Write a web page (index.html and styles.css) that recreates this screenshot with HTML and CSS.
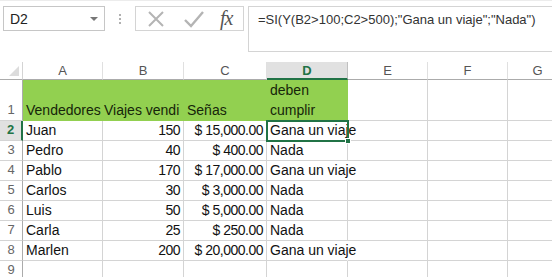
FILE: index.html
```html
<!DOCTYPE html>
<html lang="es">
<head>
    <meta charset="UTF-8">
    <title>Hoja de cálculo</title>
    <link rel="stylesheet" href="styles.css">
</head>
<body>
    <div class="formula-row">
        <div class="name-box">
            <span>D2</span>
            <span class="drop"></span>
        </div>
        <div class="grip"><i></i><i></i><i></i></div>
        <div class="fx-buttons">
            <svg class="fx-btn" width="20" height="20" viewBox="0 0 20 20">
                <path d="M3 3 L17 17 M17 3 L3 17" stroke="#b4b4b4" stroke-width="2" fill="none"/>
            </svg>
            <svg class="fx-btn" width="22" height="20" viewBox="0 0 22 20">
                <path d="M2 11 L8 17 L20 3" stroke="#b4b4b4" stroke-width="2.4" fill="none"/>
            </svg>
            <span class="fx">fx</span>
        </div>
        <div class="formula-box">=SI(Y(B2&gt;100;C2&gt;500);"Gana un viaje";"Nada")</div>
    </div>

    <div class="sheet">
        <div class="corner"><span class="tri"></span></div>
        <div class="col-head">A</div>
        <div class="col-head">B</div>
        <div class="col-head">C</div>
        <div class="col-head sel">D</div>
        <div class="col-head">E</div>
        <div class="col-head">F</div>
        <div class="col-head">G</div>

        <div class="row-head">1</div>
        <div class="cell fill">Vendedores</div>
        <div class="cell fill clip">Viajes vendi</div>
        <div class="cell fill">Señas</div>
        <div class="cell fill wrap">deben<br>cumplir</div>
        <div class="cell"></div>
        <div class="cell"></div>
        <div class="cell"></div>

        <div class="row-head sel">2</div>
        <div class="cell">Juan</div>
        <div class="cell num">150</div>
        <div class="cell num">$ 15,000.00</div>
        <div class="cell spill active">Gana un viaje<span class="handle"></span></div>
        <div class="cell"></div>
        <div class="cell"></div>
        <div class="cell"></div>

        <div class="row-head">3</div>
        <div class="cell">Pedro</div>
        <div class="cell num">40</div>
        <div class="cell num">$ 400.00</div>
        <div class="cell">Nada</div>
        <div class="cell"></div>
        <div class="cell"></div>
        <div class="cell"></div>

        <div class="row-head">4</div>
        <div class="cell">Pablo</div>
        <div class="cell num">170</div>
        <div class="cell num">$ 17,000.00</div>
        <div class="cell spill">Gana un viaje</div>
        <div class="cell"></div>
        <div class="cell"></div>
        <div class="cell"></div>

        <div class="row-head">5</div>
        <div class="cell">Carlos</div>
        <div class="cell num">30</div>
        <div class="cell num">$ 3,000.00</div>
        <div class="cell">Nada</div>
        <div class="cell"></div>
        <div class="cell"></div>
        <div class="cell"></div>

        <div class="row-head">6</div>
        <div class="cell">Luis</div>
        <div class="cell num">50</div>
        <div class="cell num">$ 5,000.00</div>
        <div class="cell">Nada</div>
        <div class="cell"></div>
        <div class="cell"></div>
        <div class="cell"></div>

        <div class="row-head">7</div>
        <div class="cell">Carla</div>
        <div class="cell num">25</div>
        <div class="cell num">$ 250.00</div>
        <div class="cell">Nada</div>
        <div class="cell"></div>
        <div class="cell"></div>
        <div class="cell"></div>

        <div class="row-head">8</div>
        <div class="cell">Marlen</div>
        <div class="cell num">200</div>
        <div class="cell num">$ 20,000.00</div>
        <div class="cell spill">Gana un viaje</div>
        <div class="cell"></div>
        <div class="cell"></div>
        <div class="cell"></div>

        <div class="row-head">9</div>
        <div class="cell"></div>
        <div class="cell"></div>
        <div class="cell"></div>
        <div class="cell"></div>
        <div class="cell"></div>
        <div class="cell"></div>
        <div class="cell"></div>
    </div>
</body>
</html>
```

FILE: styles.css
```css
* {
    margin: 0;
    padding: 0;
    box-sizing: border-box;
}

html, body {
    width: 100%;
    height: 100%;
    overflow: hidden;
}

body {
    background: #fff;
    font-family: 'Liberation Sans', Arial, sans-serif;
    color: #222;
}

/* Formula bar */
.formula-row {
    height: 62px;
    display: flex;
    align-items: flex-start;
    padding-top: 5px;
    border-top: 1px solid #ececec;
}

.name-box {
    width: 102px;
    height: 25px;
    margin-left: 3px;
    border: 1px solid #c6c6c6;
    display: flex;
    align-items: center;
    justify-content: space-between;
    padding: 0 6px 0 6px;
    font-size: 14px;
    color: #222;
}

.drop {
    width: 0;
    height: 0;
    border-left: 4px solid transparent;
    border-right: 4px solid transparent;
    border-top: 4px solid #777;
}

.grip {
    width: 30px;
    height: 25px;
    display: flex;
    flex-direction: column;
    align-items: center;
    justify-content: center;
    gap: 2px;
}

.grip i {
    width: 2px;
    height: 2px;
    background: #b0b0b0;
}

.fx-buttons {
    width: 109px;
    height: 25px;
    border: 1px solid #d4d4d4;
    display: flex;
    align-items: center;
    padding-left: 10px;
    gap: 17px;
}

.fx-btn {
    display: block;
}

.fx {
    font-family: 'Liberation Serif', 'Times New Roman', serif;
    font-style: italic;
    font-size: 20px;
    color: #555;
    margin-left: -2px;
    letter-spacing: -1px;
}

.formula-box {
    flex: 1;
    height: 46px;
    margin-left: 4px;
    border: 1px solid #d4d4d4;
    border-right: none;
    padding: 5px 0 0 9px;
    font-size: 13px;
    color: #333;
}

/* Sheet grid */
.sheet {
    display: grid;
    grid-template-columns: 23px 80px 81px 83px 81px 80px 80px 60px;
    grid-template-rows: 18px 41px repeat(8, 20px);
    font-size: 14px;
}

.corner {
    position: relative;
    border-right: 1px solid #d4d4d4;
    border-bottom: 1px solid #ababab;
}

.tri {
    position: absolute;
    right: 3px;
    bottom: 3px;
    width: 0;
    height: 0;
    border-left: 10px solid transparent;
    border-bottom: 10px solid #dcdcdc;
}

.col-head {
    display: flex;
    align-items: center;
    justify-content: center;
    font-size: 13px;
    color: #555;
    border-right: 1px solid #e0e0e0;
    border-bottom: 1px solid #ababab;
}

.col-head.sel {
    background: #e1e1e1;
    color: #217346;
    font-weight: bold;
    border-bottom: 2px solid #217346;
    border-right: 1px solid #c0c0c0;
}

.row-head {
    display: flex;
    align-items: flex-end;
    justify-content: center;
    padding-bottom: 1px;
    font-size: 13px;
    line-height: 18px;
    color: #666;
    border-right: 1px solid #ababab;
    border-bottom: 1px solid #d4d4d4;
}

.row-head.sel {
    background: #e1e1e1;
    color: #217346;
    font-weight: bold;
    border-right: 2px solid #217346;
}

.cell {
    display: flex;
    align-items: flex-end;
    padding: 0 2px 0 3px;
    line-height: 19px;
    white-space: nowrap;
    color: #111;
    border-right: 1px solid #d4d4d4;
    border-bottom: 1px solid #d4d4d4;
}

.cell.num {
    justify-content: flex-end;
    padding-right: 3px;
    letter-spacing: -0.5px;
}

.cell.fill {
    background: #92d050;
    color: #16250a;
    border-color: #92d050;
}

.cell.clip {
    overflow: hidden;
    padding-left: 1px;
}

.cell.wrap {
    white-space: normal;
    line-height: 20px;
}

.cell.spill {
    border-right-color: transparent;
    position: relative;
    z-index: 1;
}

.cell.active {
    outline: 2px solid #217346;
    outline-offset: -1px;
    z-index: 2;
}

.handle {
    position: absolute;
    right: -4px;
    bottom: -4px;
    width: 6px;
    height: 6px;
    background: #217346;
    border: 1px solid #fff;
}
```
